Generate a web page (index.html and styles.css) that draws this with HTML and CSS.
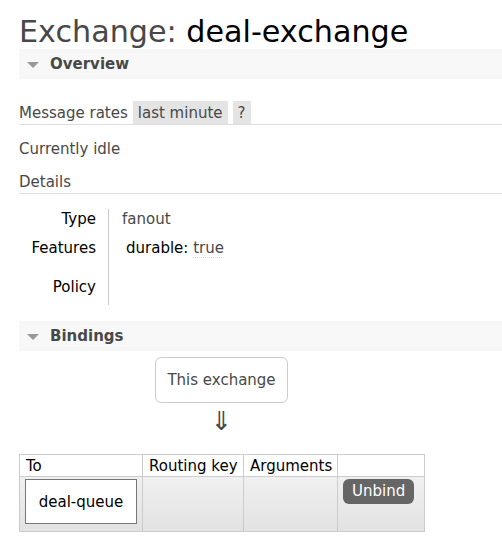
FILE: index.html
```html
<!DOCTYPE html>
<html>
<head>
<meta charset="utf-8">
<link rel="stylesheet" href="styles.css">
</head>
<body>
<div class="page">
  <h1 class="title"><span class="title-label">Exchange:</span> <span class="title-name">deal-exchange</span></h1>

  <section class="section">
    <h2 class="section-head"><span class="tri"></span>Overview</h2>
    <div class="rates-row">
      <span class="rates-label">Message rates</span>
      <span class="pill">last minute</span>
      <span class="pill">?</span>
    </div>
    <p class="idle">Currently idle</p>
    <h3 class="sub-head">Details</h3>
    <table class="facts">
      <tr class="r-type"><th>Type</th><td>fanout</td></tr>
      <tr class="r-feat"><th>Features</th><td><span class="feat"><span class="feat-key">durable:</span> <abbr class="feat-val">true</abbr></span></td></tr>
      <tr class="r-pol"><th>Policy</th><td></td></tr>
    </table>
  </section>

  <section class="section">
    <h2 class="section-head bindings-head"><span class="tri"></span>Bindings</h2>
    <div class="bindings">
      <div class="exch-box">This exchange</div>
      <div class="arrow">⇓</div>
      <table class="list">
        <colgroup><col class="c1"><col class="c2"><col class="c3"><col class="c4"></colgroup>
        <thead>
          <tr><th>To</th><th>Routing key</th><th>Arguments</th><th></th></tr>
        </thead>
        <tbody>
          <tr>
            <td><div class="queue-box">deal-queue</div></td>
            <td></td>
            <td></td>
            <td><span class="btn">Unbind</span></td>
          </tr>
        </tbody>
      </table>
    </div>
  </section>
</div>
</body>
</html>
```

FILE: styles.css
```css
html, body {
  margin: 0;
  padding: 0;
  background: #fff;
}
body {
  font-family: "DejaVu Sans", Verdana, sans-serif;
  font-size: 15px;
  color: #484848;
}
.page {
  padding-left: 19px;
}
.title {
  margin: 0;
  padding-top: 15px;
  font-size: 30.2px;
  line-height: 34px;
  font-weight: normal;
  white-space: nowrap;
}
.title-label {
  color: #484848;
}
.title-name {
  color: #000;
}
.section-head {
  margin: 0;
  height: 30px;
  background: #f8f8f8;
  font-size: 15px;
  line-height: 30px;
  font-weight: bold;
  color: #484848;
  display: flex;
  align-items: center;
  padding-left: 8px;
}
.tri {
  width: 0;
  height: 0;
  border-left: 6.5px solid transparent;
  border-right: 6.5px solid transparent;
  border-top: 6px solid #999;
  margin-right: 11px;
  margin-top: 1px;
}
.rates-row {
  margin-top: 22px;
  height: 23px;
  border-bottom: 1px solid #ddd;
  display: flex;
  align-items: center;
  gap: 5px;
}
.pill {
  background: #e4e4e4;
  height: 23px;
  line-height: 24px;
  padding: 0 5px;
}
.idle {
  margin: 16px 0 0;
  line-height: 17px;
}
.sub-head {
  margin: 16px 0 0;
  font-size: 15px;
  font-weight: normal;
  line-height: 17px;
  padding-bottom: 2px;
  border-bottom: 1px solid #ddd;
}
.facts {
  margin-top: 15px;
  border-collapse: collapse;
}
.facts th {
  width: 77px;
  text-align: right;
  font-weight: normal;
  color: #000;
  padding: 0 12px 0 0;
  border-right: 1px solid #ccc;
  vertical-align: middle;
}
.facts td {
  padding: 0 0 0 13px;
  vertical-align: middle;
}
.r-type { height: 19px; }
.r-feat { height: 40px; }
.r-pol { height: 37px; }
.feat {
  padding-left: 4px;
}
.feat-key {
  color: #000;
}
.feat-val {
  text-decoration: none;
  border-bottom: 1px dotted #ddd;
}
.bindings-head {
  margin-top: 16px;
}
.bindings {
  width: 405px;
  display: flex;
  flex-direction: column;
  align-items: center;
}
.exch-box {
  margin-top: 6px;
  height: 44px;
  line-height: 45px;
  padding: 0 11px;
  border: 1px solid #ccc;
  border-radius: 6px;
  color: #484848;
}
.arrow {
  margin-top: 3px;
  font-size: 26px;
  line-height: 30px;
  color: #484848;
}
.list {
  margin-top: 18px;
  width: 405px;
  border-collapse: collapse;
  table-layout: fixed;
  align-self: flex-start;
}
.c1 { width: 123px; }
.c2 { width: 101px; }
.c3 { width: 94px; }
.c4 { width: 87px; }
.list th, .list td {
  border: 1px solid #ccc;
}
.list th {
  height: 21px;
  padding: 0 6px;
  text-align: left;
  font-weight: normal;
  color: #000;
  background: #fff;
  white-space: nowrap;
}
.list tbody tr {
  background: linear-gradient(#f0f0f0, #e2e2e2);
}
.list td {
  height: 49px;
  padding: 2px 5px 3px;
  vertical-align: top;
}
.queue-box {
  width: 110px;
  height: 43px;
  line-height: 44px;
  border: 1px solid #777;
  background: #fff;
  color: #000;
  text-align: center;
}
.btn {
  display: inline-block;
  height: 25px;
  line-height: 25px;
  padding: 0 9px;
  background: #666;
  color: #fff;
  border-radius: 6px;
}
```
